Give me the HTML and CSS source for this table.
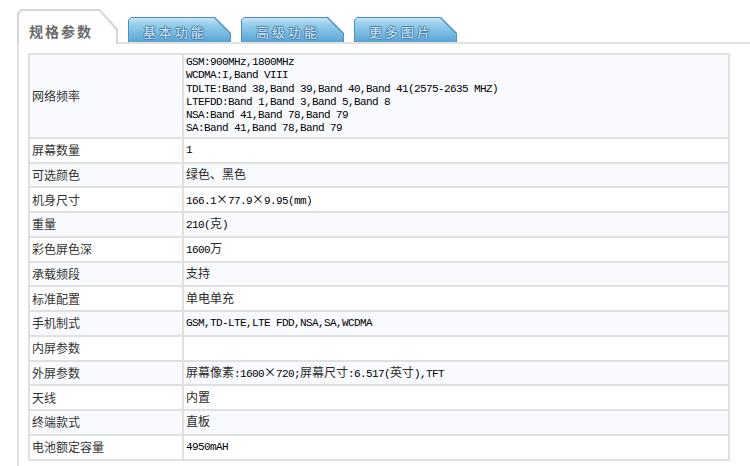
FILE: index.html
```html
<!DOCTYPE html>
<html lang="zh-CN">
<head>
<meta charset="utf-8">
<title>规格参数</title>
<link rel="stylesheet" href="styles.css">
</head>
<body>
<div class="wrap">
  <div class="tabs">
    <div class="tab-active"><div class="tab-active-in">规格参数</div></div>
    <div class="tab"><div class="tab-in">基本功能</div></div>
    <div class="tab"><div class="tab-in">高级功能</div></div>
    <div class="tab"><div class="tab-in">更多图片</div></div>
  </div>
  <div class="panel">
    <table class="spec">
      <tr class="alt">
        <td class="k">网络频率</td>
        <td class="v multi">GSM:900MHz,1800MHz<br>WCDMA:I,Band VIII<br>TDLTE:Band 38,Band 39,Band 40,Band 41(2575-2635 MHZ)<br>LTEFDD:Band 1,Band 3,Band 5,Band 8<br>NSA:Band 41,Band 78,Band 79<br>SA:Band 41,Band 78,Band 79</td>
      </tr>
      <tr><td class="k">屏幕数量</td><td class="v">1</td></tr>
      <tr class="alt"><td class="k">可选颜色</td><td class="v"><span class="zh">绿色、黑色</span></td></tr>
      <tr><td class="k">机身尺寸</td><td class="v">166.1<span class="x">×</span>77.9<span class="x">×</span>9.95(mm)</td></tr>
      <tr class="alt"><td class="k">重量</td><td class="v">210(<span class="zh">克</span>)</td></tr>
      <tr><td class="k">彩色屏色深</td><td class="v">1600<span class="zh">万</span></td></tr>
      <tr class="alt"><td class="k">承载频段</td><td class="v"><span class="zh">支持</span></td></tr>
      <tr><td class="k">标准配置</td><td class="v"><span class="zh">单电单充</span></td></tr>
      <tr class="alt"><td class="k">手机制式</td><td class="v">GSM,TD-LTE,LTE FDD,NSA,SA,WCDMA</td></tr>
      <tr><td class="k">内屏参数</td><td class="v"></td></tr>
      <tr class="alt"><td class="k">外屏参数</td><td class="v"><span class="zh">屏幕像素</span>:1600<span class="x">×</span>720;<span class="zh">屏幕尺寸</span>:6.517(<span class="zh">英寸</span>),TFT</td></tr>
      <tr><td class="k">天线</td><td class="v"><span class="zh">内置</span></td></tr>
      <tr class="alt"><td class="k">终端款式</td><td class="v"><span class="zh">直板</span></td></tr>
      <tr><td class="k">电池额定容量</td><td class="v">4950mAH</td></tr>
    </table>
  </div>
</div>
</body>
</html>
```

FILE: styles.css
```css
html, body {
  margin: 0;
  padding: 0;
  background: #ffffff;
}

body {
  font-family: "Noto Sans CJK SC", "Noto Sans", sans-serif;
  color: #333;
  overflow: hidden;
}

.wrap {
  padding: 9px 0 0 17px;
}

.tabs {
  display: flex;
  align-items: flex-end;
  gap: 10px;
  height: 33px;
  border-bottom: 2px solid #e2e2e2;
}

.tab-active {
  width: 101px;
  height: 35px;
  margin-bottom: -2px;
  background: #d6d6d6;
  clip-path: polygon(0 100%, 0 4px, 4px 0, 83px 0, 101px 20px, 101px 100%);
  display: flex;
  flex-direction: column;
}

.tab-active-in {
  flex: 1;
  margin: 2px 2px 0 2px;
  background: #ffffff;
  clip-path: polygon(0 100%, 0 3px, 3px 0, 80px 0, 97px 19px, 97px 100%);
  font-size: 14px;
  font-weight: bold;
  color: #6a6a6a;
  letter-spacing: 2px;
  line-height: 16px;
  padding: 12px 0 0 10px;
}

.tab {
  width: 103px;
  height: 25px;
  background: #4d8fc0;
  clip-path: polygon(0 100%, 0 3px, 3px 0, 87px 0, 103px 16px, 103px 100%);
  display: flex;
  flex-direction: column;
}

.tab-in {
  flex: 1;
  margin: 1px 1px 0 1px;
  background: linear-gradient(to bottom, #c4e4f6 0%, #94cbea 30%, #77b9e1 65%, #5aa3d4 100%);
  clip-path: polygon(0 100%, 0 2px, 2px 0, 85px 0, 101px 16px, 101px 100%);
  font-size: 13px;
  color: #d9e9f3;
  letter-spacing: 3px;
  line-height: 15px;
  padding: 6px 0 0 14px;
  text-shadow: -1px 0 #3f7fae, 1px 0 #3f7fae, 0 -1px #3f7fae, 0 1px #3f7fae;
}

.panel {
  border-left: 2px solid #e2e2e2;
  padding: 9px 0 5px 9px;
}

.spec {
  width: 702px;
  border-collapse: collapse;
  border: 2px solid #e0e0e0;
}

.spec td {
  border: 2px solid #e0e0e0;
  height: 22.75px;
  padding: 0 2px;
  vertical-align: middle;
  line-height: 14px;
}

.spec tr.alt td {
  background: #f8fafd;
}

.k {
  width: 148px;
  font-size: 12px;
  color: #333;
  padding-left: 2px;
}

.v {
  font-family: "Liberation Mono", "Noto Sans CJK SC", monospace;
  font-size: 11px;
  letter-spacing: -0.6px;
  color: #000;
}

.v.multi {
  line-height: 13.3px;
  padding-top: 1px;
  padding-bottom: 1px;
}

.zh {
  font-family: "Noto Sans CJK SC", sans-serif;
  font-size: 12px;
  letter-spacing: 0;
  line-height: 14px;
  color: #2a2a2a;
}

.x {
  display: inline-block;
  width: 12px;
  text-align: center;
  font-family: "Noto Sans CJK SC", sans-serif;
  font-size: 12px;
  letter-spacing: 0;
  line-height: 14px;
}
```
